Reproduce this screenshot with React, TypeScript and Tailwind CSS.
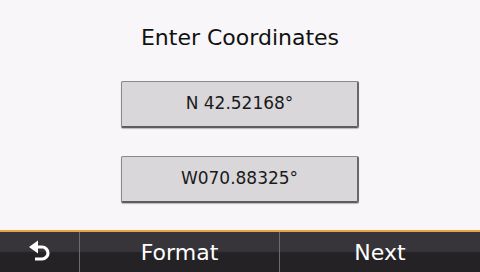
import React from 'react';

const font = { fontFamily: '"DejaVu Sans", sans-serif' };

function CoordButton({ label }: { label: string }) {
  return (
    <button
      className="w-[238px] h-[47px] bg-[#d9d7da] border border-[#8a888b] border-b-2 border-r-2 border-b-[#5e5c5f] border-r-[#6a686b] rounded-[2px] shadow-[0_1px_1px_rgba(0,0,0,0.25)] flex items-center justify-center text-[17px] text-[#1a1a1a]"
    >
      {label}
    </button>
  );
}

function BackIcon() {
  return (
    <svg width="26" height="24" viewBox="0 0 26 24" fill="none">
      <path d="M2 7 L11 0.5 L11 13.5 Z" fill="#fff" />
      <path
        d="M10 7 H15 A6 6 0 0 1 15 19 H8"
        stroke="#fff"
        strokeWidth="3.2"
        fill="none"
      />
    </svg>
  );
}

export default function App() {
  return (
    <div className="w-[480px] h-[272px] flex flex-col bg-[#f8f6f9] overflow-hidden" style={font}>
      <div className="flex-1 flex flex-col items-center">
        <h1 className="mt-[25px] text-[22px] leading-[26px] text-[#111]">Enter Coordinates</h1>
        <div className="mt-[30px]">
          <CoordButton label="N 42.52168°" />
        </div>
        <div className="mt-[28px]">
          <CoordButton label="W070.88325°" />
        </div>
      </div>
      <div className="h-[42px] border-t-2 border-t-[#e9a347] flex bg-[linear-gradient(to_bottom,#37343a_0%,#37343a_48%,#252226_52%,#252226_100%)] text-white text-[22px]">
        <div className="w-[80px] flex items-center justify-center border-r border-r-[#6d6b6e]">
          <BackIcon />
        </div>
        <div className="w-[200px] flex items-center justify-center border-r border-r-[#6d6b6e]">
          Format
        </div>
        <div className="flex-1 flex items-center justify-center">Next</div>
      </div>
    </div>
  );
}
